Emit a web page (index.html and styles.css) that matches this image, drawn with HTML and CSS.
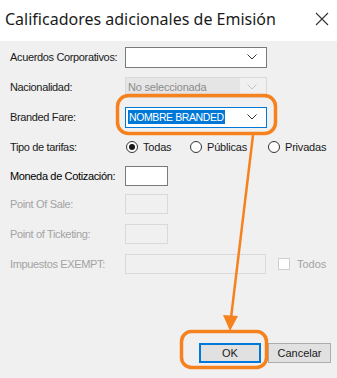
FILE: index.html
```html
<!DOCTYPE html>
<html lang="es">
<head>
  <meta charset="UTF-8" />
  <meta name="viewport" content="width=device-width, initial-scale=1.0"/>
  <title>Calificadores adicionales de Emisión</title>
  <link rel="stylesheet" href="styles.css">
</head>
<body>

  <!-- Ventana de diálogo -->
  <div class="dialog">

    <!-- Barra de título -->
    <div class="titlebar">
      <span class="title">Calificadores adicionales de Emisión</span>
      <svg class="close" width="14" height="14" viewBox="0 0 14 14">
        <path d="M1 1 L13 13 M13 1 L1 13" stroke="#333" stroke-width="1.1" fill="none"/>
      </svg>
    </div>

    <!-- Formulario -->
    <div class="form">
      <div class="label">Acuerdos Corporativos:</div>
      <div class="field">
        <div class="combo">
          <span class="combo-text"></span>
          <svg class="chevron" width="10" height="6" viewBox="0 0 10 6"><path d="M0.5 0.5 L5 5 L9.5 0.5" stroke="#333" stroke-width="1" fill="none"/></svg>
        </div>
      </div>

      <div class="label">Nacionalidad:</div>
      <div class="field">
        <div class="combo combo-disabled">
          <span class="combo-text">No seleccionada</span>
          <svg class="chevron" width="10" height="6" viewBox="0 0 10 6"><path d="M0.5 0.5 L5 5 L9.5 0.5" stroke="#c4c4c4" stroke-width="1" fill="none"/></svg>
        </div>
      </div>

      <div class="label">Branded Fare:</div>
      <div class="field">
        <div class="combo combo-focus">
          <span class="combo-text"><span class="selected">NOMBRE BRANDED</span></span>
          <svg class="chevron" width="10" height="6" viewBox="0 0 10 6"><path d="M0.5 0.5 L5 5 L9.5 0.5" stroke="#333" stroke-width="1" fill="none"/></svg>
        </div>
      </div>

      <div class="label">Tipo de tarifas:</div>
      <div class="field radios">
        <div class="radio-option opt-todas"><span class="radio checked"></span>Todas</div>
        <div class="radio-option opt-publicas"><span class="radio"></span>Públicas</div>
        <div class="radio-option"><span class="radio"></span>Privadas</div>
      </div>

      <div class="label label-strong">Moneda de Cotización:</div>
      <div class="field"><div class="textbox small"></div></div>

      <div class="label label-disabled">Point Of Sale:</div>
      <div class="field"><div class="textbox small disabled"></div></div>

      <div class="label label-disabled">Point of Ticketing:</div>
      <div class="field"><div class="textbox small disabled"></div></div>

      <div class="label label-disabled">Impuestos EXEMPT:</div>
      <div class="field">
        <div class="textbox wide disabled"></div>
        <div class="check-option"><span class="checkbox"></span>Todos</div>
      </div>
    </div>

    <!-- Botones -->
    <div class="footer">
      <button class="btn btn-default">OK</button>
      <button class="btn">Cancelar</button>
    </div>

    <!-- Anotaciones naranjas sobre la captura -->
    <svg class="marks" width="337" height="378" viewBox="0 0 337 378">
      <rect x="117.5" y="95.5" width="158" height="38" rx="11" fill="none" stroke="#f5821f" stroke-width="3.5"/>
      <rect x="181.5" y="331.5" width="85" height="36" rx="10" fill="none" stroke="#f5821f" stroke-width="3.5"/>
      <path d="M253 135 L231 318" stroke="#f5821f" stroke-width="2.5" fill="none"/>
      <path d="M223 315 L238 316 L230 331 Z" fill="#f5821f"/>
    </svg>
  </div>

</body>
</html>
```

FILE: styles.css
```css
/* Página */
html, body {
  margin: 0;
  padding: 0;
  background: #f0f0f0;
}

/* Diálogo completo */
.dialog {
  position: relative;
  width: 337px;
  height: 378px;
  display: flex;
  flex-direction: column;
  background: #f0f0f0;
  font-family: "Liberation Sans", Arial, sans-serif;
  font-size: 11px;
  color: #1a1a1a;
  overflow: hidden;
}

/* Barra de título */
.titlebar {
  height: 41px;
  background: #fff;
  display: flex;
  align-items: center;
  justify-content: space-between;
  padding: 0 8px 4px 5px;
  box-sizing: border-box;
}

.title {
  font-family: "Noto Sans", "Open Sans", sans-serif;
  font-size: 16px;
  color: #1b1b1b;
}

/* Formulario en rejilla */
.form {
  display: grid;
  grid-template-columns: 115px 1fr;
  grid-template-rows: 30px 30px 30px 30px 27px 30px 30px 29px;
  padding: 1px 0 0 10px;
}

.label {
  display: flex;
  align-items: center;
  letter-spacing: -0.35px;
}

.label-strong {
  color: #000;
}

.label-disabled {
  color: #a3a3a3;
}

.field {
  display: flex;
  align-items: center;
}

/* Combo */
.combo {
  width: 142px;
  height: 21px;
  box-sizing: border-box;
  border: 1px solid #7a7a7a;
  background: #fff;
  display: flex;
  align-items: center;
  justify-content: space-between;
  padding: 0 9px 0 2px;
}

.combo-disabled {
  border-color: #d9d9d9;
  background: #f0f0f0;
  padding-left: 0;
}

.combo-disabled .combo-text {
  background: #e5e5e5;
  color: #8c8c8c;
  width: 112px;
  height: 19px;
  line-height: 19px;
  padding-left: 2px;
  letter-spacing: -0.2px;
}

.combo-focus {
  border-color: #0078d7;
}

.selected {
  background: #0078d7;
  color: #fff;
  padding: 1px 1px;
  font-size: 10.5px;
  letter-spacing: -0.4px;
}

/* Radios */
.radios {
  padding-left: 1px;
}

.radio-option {
  display: flex;
  align-items: center;
  gap: 5px;
  letter-spacing: -0.2px;
}

.opt-todas {
  width: 64px;
}

.opt-publicas {
  width: 78px;
}

.radio {
  width: 12px;
  height: 12px;
  box-sizing: border-box;
  border: 1px solid #333;
  border-radius: 50%;
  background: #fff;
  display: flex;
  align-items: center;
  justify-content: center;
}

.radio.checked::after {
  content: "";
  width: 6px;
  height: 6px;
  border-radius: 50%;
  background: #1a1a1a;
}

/* Cajas de texto */
.textbox {
  height: 20px;
  box-sizing: border-box;
  border: 1px solid #7a7a7a;
  background: #fff;
}

.textbox.small {
  width: 43px;
}

.textbox.wide {
  width: 141px;
}

.textbox.disabled {
  border-color: #d9d9d9;
  background: #f0f0f0;
}

/* Casilla Todos */
.check-option {
  display: flex;
  align-items: center;
  gap: 7px;
  margin-left: 12px;
  color: #a3a3a3;
}

.checkbox {
  width: 12px;
  height: 12px;
  box-sizing: border-box;
  border: 1px solid #cfcfcf;
  background: #fff;
}

/* Botones inferiores */
.footer {
  margin-top: auto;
  display: flex;
  justify-content: flex-end;
  gap: 7px;
  padding: 0 6px 15px 0;
}

.btn {
  width: 63px;
  height: 20px;
  box-sizing: border-box;
  border: 1px solid #adadad;
  background: #e1e1e1;
  font-family: "Liberation Sans", Arial, sans-serif;
  font-size: 11px;
  color: #1a1a1a;
  padding: 0;
}

.btn-default {
  border: 2px solid #0078d7;
  width: 62px;
}

/* Capa de anotaciones */
.marks {
  position: absolute;
  top: 0;
  left: 0;
  pointer-events: none;
}
```
